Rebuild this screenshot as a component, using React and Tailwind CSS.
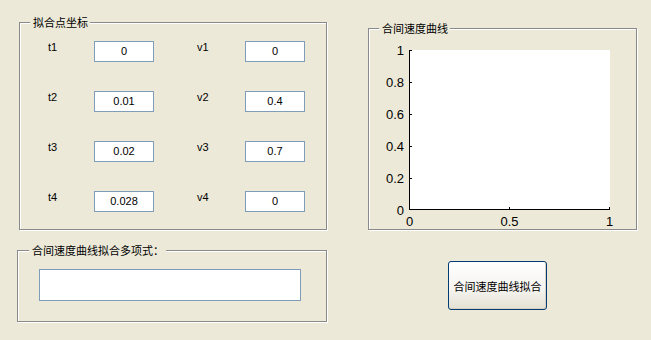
import React from "react";

const CJK = "font-['SimSun','Noto_Sans_CJK_SC',sans-serif]";

function Group({ title, className, titleLeft = "left-[10px]", children }) {
  return (
    <div
      className={`relative border border-[#8a8a8a] shadow-[1px_1px_0_#ffffff,inset_1px_1px_0_#ffffff] ${className}`}
    >
      <span
        className={`absolute -top-[7px] ${titleLeft} bg-[#ece9d8] pl-[3px] pr-[2px] text-[11px] leading-[12px] text-black whitespace-nowrap ${CJK}`}
      >
        {title}
      </span>
      {children}
    </div>
  );
}

function Box({ value }) {
  return (
    <div className="w-[60px] h-[21px] border border-[#7f9db9] bg-white flex items-center justify-center text-[11px] text-black font-['Liberation_Sans',Arial,sans-serif] leading-none">
      {value}
    </div>
  );
}

function Row({ t, tv, v, vv }) {
  return (
    <div className="flex items-start h-[21px] font-['Liberation_Sans',Arial,sans-serif] text-[11px] text-black">
      <span className="w-[46px] leading-[13px]">{t}</span>
      <Box value={tv} />
      <span className="ml-[43px] w-[48px] leading-[13px]">{v}</span>
      <Box value={vv} />
    </div>
  );
}

function Chart() {
  const yt = [
    ["1", 21],
    ["0.8", 53],
    ["0.6", 85],
    ["0.4", 117],
    ["0.2", 149],
    ["0", 181],
  ];
  const xt = [
    ["0", 40.5],
    ["0.5", 140.5],
    ["1", 240.5],
  ];
  return (
    <svg width="267" height="200" className="block" fontFamily="'Liberation Sans', Arial, sans-serif" fontSize="13">
      <rect x="41" y="21" width="200" height="160" fill="#ffffff" />
      <line x1="40.5" y1="21" x2="40.5" y2="181" stroke="#000" strokeWidth="1" />
      <line x1="40" y1="180.5" x2="241" y2="180.5" stroke="#000" strokeWidth="1" />
      {yt.map(([l, y]) => (
        <g key={l}>
          <line x1="40" y1={y === 181 ? 180.5 : y + 0.5} x2="43" y2={y === 181 ? 180.5 : y + 0.5} stroke="#000" />
          <text x="35" y={y + 5} textAnchor="end" fill="#000">
            {l}
          </text>
        </g>
      ))}
      {xt.map(([l, x]) => (
        <g key={l}>
          <line x1={x} y1="178" x2={x} y2="181" stroke="#000" />
          <text x={x} y="197" textAnchor="middle" fill="#000">
            {l}
          </text>
        </g>
      ))}
    </svg>
  );
}

export default function App() {
  return (
    <div className="w-[651px] h-[340px] bg-[#ece9d8] flex pt-[22px] overflow-hidden">
      <div className="ml-[17px] w-[311px] flex flex-col">
        <Group title="拟合点坐标" className="ml-[2px] w-[308px] h-[208px]">
          <div className="pt-[18px] pl-[28px] flex flex-col gap-[29px]">
            <Row t="t1" tv="0" v="v1" vv="0" />
            <Row t="t2" tv="0.01" v="v2" vv="0.4" />
            <Row t="t3" tv="0.02" v="v3" vv="0.7" />
            <Row t="t4" tv="0.028" v="v4" vv="0" />
          </div>
        </Group>
        <Group title="合间速度曲线拟合多项式：" titleLeft="left-[11px]" className="mt-[20px] w-[310px] h-[72px]">
          <div className="ml-[21px] mt-[18px] w-[262px] h-[32px] border border-[#7f9db9] bg-white" />
        </Group>
      </div>
      <div className="ml-[40px] flex flex-col">
        <Group title="合间速度曲线" className="mt-[6px] w-[269px] h-[202px]">
          <Chart />
        </Group>
        <button className="mt-[31px] ml-[80px] w-[99px] h-[49px] rounded-[3px] border border-[#003c74] bg-[linear-gradient(#ffffff,#f4f3ee_60%,#e3e0d3)] shadow-[inset_-1px_-1px_0_#d6d0c5] flex items-center justify-center">
          <span className={`text-[11px] leading-[12px] text-black ${CJK}`}>合间速度曲线拟合</span>
        </button>
      </div>
    </div>
  );
}
